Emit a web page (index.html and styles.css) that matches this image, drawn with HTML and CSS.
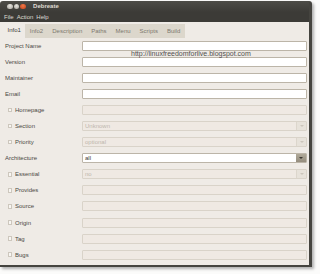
FILE: index.html
```html
<!DOCTYPE html>
<html>
<head>
<meta charset="utf-8">
<link rel="stylesheet" href="styles.css">
</head>
<body>
<div class="window">
  <div class="titlebar">
    <span class="btn grey"></span><span class="btn grey"></span><span class="btn orange"></span>
    <span class="title">Debreate</span>
  </div>
  <div class="menubar"><span>File</span><span>Action</span><span>Help</span></div>
  <div class="tabs">
    <div class="tab active">Info1</div>
    <div class="tab">Info2</div>
    <div class="tab">Description</div>
    <div class="tab">Paths</div>
    <div class="tab">Menu</div>
    <div class="tab">Scripts</div>
    <div class="tab">Build</div>
  </div>
  <div class="panel">
    <div class="row"><div class="label">Project Name</div><div class="field"></div></div>
    <div class="row"><div class="label">Version</div><div class="field"></div></div>
    <div class="row"><div class="label">Maintainer</div><div class="field"></div></div>
    <div class="row"><div class="label">Email</div><div class="field"></div></div>
    <div class="row"><div class="label"><span class="check"></span>Homepage</div><div class="field disabled"></div></div>
    <div class="row"><div class="label"><span class="check"></span>Section</div><div class="field disabled combo"><span class="val">Unknown</span><span class="arrow"></span></div></div>
    <div class="row"><div class="label"><span class="check"></span>Priority</div><div class="field disabled combo"><span class="val">optional</span><span class="arrow"></span></div></div>
    <div class="row"><div class="label">Architecture</div><div class="field combo"><span class="val">all</span><span class="arrow"></span></div></div>
    <div class="row"><div class="label"><span class="check"></span>Essential</div><div class="field disabled combo"><span class="val">no</span><span class="arrow"></span></div></div>
    <div class="row"><div class="label"><span class="check"></span>Provides</div><div class="field disabled"></div></div>
    <div class="row"><div class="label"><span class="check"></span>Source</div><div class="field disabled"></div></div>
    <div class="row"><div class="label"><span class="check"></span>Origin</div><div class="field disabled"></div></div>
    <div class="row"><div class="label"><span class="check"></span>Tag</div><div class="field disabled"></div></div>
    <div class="row"><div class="label"><span class="check"></span>Bugs</div><div class="field disabled"></div></div>
  </div>
  <div class="watermark">http://linuxfreedomforlive.blogspot.com</div>
</div>
</body>
</html>
```
FILE: styles.css
```css
* { box-sizing: border-box; margin: 0; padding: 0; }
html, body { width: 320px; height: 274px; overflow: hidden; }
body {
  background: #fbfbfa;
  font-family: "Liberation Sans", Arial, sans-serif;
  font-size: 6px;
  color: #3c3b37;
}
.window {
  position: relative;
  margin-top: 1px;
  width: 312px;
  height: 266px;
  background: #efebe6;
  border-right: 3px solid #45443f;
  border-bottom: 2px solid #45443f;
  border-radius: 3px 3px 0 0;
  box-shadow: 2px 2px 3px rgba(0, 0, 0, 0.3);
  display: flex;
  flex-direction: column;
  overflow: hidden;
}
.titlebar {
  height: 10.5px;
  flex: none;
  display: flex;
  align-items: center;
  padding-left: 7px;
  background: linear-gradient(#4d4c47, #3c3b37);
}
.btn {
  width: 5.5px;
  height: 5.5px;
  border-radius: 50%;
  margin-right: 1.2px;
}
.btn.grey { background: radial-gradient(circle at 50% 35%, #e6e4df, #a7a49c); }
.btn.orange { background: radial-gradient(circle at 50% 35%, #f07a4a, #c0401a); }
.title {
  margin-left: 6px;
  font-weight: bold;
  color: #dfdbd2;
}
.menubar {
  height: 10.5px;
  flex: none;
  display: flex;
  align-items: center;
  gap: 3px;
  padding-left: 4px;
  background: #3c3b37;
  color: #dfdbd2;
}
.tabs {
  height: 16px;
  flex: none;
  display: flex;
  align-items: flex-end;
  padding-left: 3px;
}
.tab {
  height: 14px;
  line-height: 14px;
  padding: 0 4.5px;
  background: #dcd7cc;
  color: #7d786f;
}
.tab.active {
  height: 15px;
  background: #efebe6;
  color: #3c3b37;
}
.panel {
  flex: 1;
  padding-top: 2.5px;
}
.row {
  height: 16.1px;
  display: flex;
  align-items: flex-start;
}
.label {
  width: 82px;
  height: 10px;
  line-height: 10px;
  padding-left: 5px;
  display: flex;
  align-items: center;
  color: #4a4843;
}
.check {
  width: 4.5px;
  height: 4.5px;
  border: 1px solid #cdc7bd;
  background: #f8f6f3;
  margin-left: 2.5px;
  margin-right: 3px;
}
.field {
  width: 225px;
  height: 10px;
  border: 1px solid #bcb5a8;
  border-radius: 1px;
  background: #ffffff;
  display: flex;
  align-items: center;
  color: #3c3b37;
}
.field.disabled {
  background: #efe9e3;
  border-color: #d9d3c9;
  color: #bdb7ae;
}
.val {
  flex: 1;
  padding-left: 2px;
}
.arrow {
  width: 10px;
  height: 100%;
  display: flex;
  align-items: center;
  justify-content: center;
  background: linear-gradient(#b0a999, #958d7e);
}
.arrow::after {
  content: "";
  border-left: 2px solid transparent;
  border-right: 2px solid transparent;
  border-top: 2.5px solid #3a3630;
}
.disabled .arrow {
  background: #e7e2da;
  border-left: 1px solid #dcd6cc;
}
.disabled .arrow::after {
  border-top-color: #cbc5bb;
}
.watermark {
  position: absolute;
  left: 131px;
  top: 49px;
  font-size: 7px;
  color: #505050;
  white-space: nowrap;
}
```
